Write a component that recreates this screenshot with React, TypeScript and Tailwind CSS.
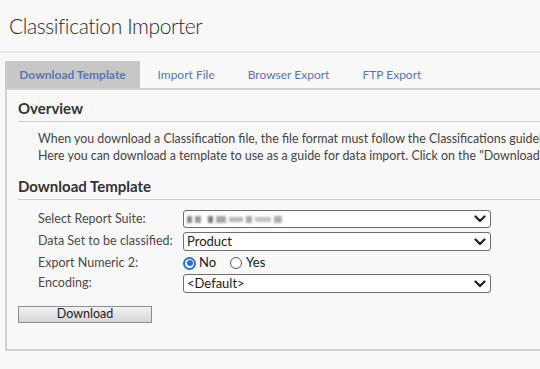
import { ReactNode } from "react";

function Chevron() {
  return (
    <svg width="12" height="8" viewBox="0 0 12 8" className="shrink-0">
      <polyline points="1.5,1.5 6,6 10.5,1.5" fill="none" stroke="#222" strokeWidth="2.2" strokeLinecap="round" strokeLinejoin="round" />
    </svg>
  );
}

function FakeSelect({ children, h = "h-[18px]" }: { children?: ReactNode; h?: string }) {
  return (
    <div className={`flex w-[308px] ${h} items-center justify-between rounded-[3px] border border-[#6e6e6e] bg-white pl-[3px] pr-[4px] text-[13px] leading-none text-[#1a1a1a]`}>
      <div className="flex items-center">{children}</div>
      <Chevron />
    </div>
  );
}

function Row({ label, h, children }: { label: string; h: string; children: ReactNode }) {
  return (
    <div className={`flex ${h} items-center`}>
      <div className="w-[145px] shrink-0 whitespace-nowrap text-[12.5px] text-[#4a4a4a]">{label}</div>
      {children}
    </div>
  );
}

function Heading({ children }: { children: ReactNode }) {
  return (
    <div className="border-b border-[#cfcfcf] pb-[3px] text-[15px] font-bold leading-[20px] text-[#333]">{children}</div>
  );
}

const tabs = ["Download Template", "Import File", "Browser Export", "FTP Export"];

export default function App() {
  return (
    <div className="h-[369px] w-[540px] overflow-hidden bg-[#f8f8f8] font-['Lato',sans-serif]">
      <div className="w-[760px]">
        <h1 className="h-[51px] pl-[9px] pt-[11px] text-[21px] font-light leading-[30px] tracking-[-0.4px] text-[#2c2c2c]">
          Classification Importer
        </h1>
        <div className="h-[2px] bg-[#e8e8e8]" />

        <div className="mt-[8px] flex h-[27px] pl-[5px]">
          {tabs.map((t, i) => (
            <div
              key={t}
              className={
                i === 0
                  ? "mr-[1px] flex w-[135px] items-center justify-center bg-[#c7c7c7] text-[12px] font-bold text-[#5676b3]"
                  : "flex items-center px-[16.5px] text-[12px] text-[#5676b3]"
              }
            >
              {t}
            </div>
          ))}
        </div>

        <div className="ml-[5px] h-[263px] border-b-2 border-l-2 border-t-2 border-[#d0d0d0] pl-[11px] pt-[8px]">
          <Heading>Overview</Heading>
          <div className="pl-[20px] pt-[8px] text-[12.4px] leading-[17px] whitespace-nowrap text-[#444]">
            <div>When you download a Classification file, the file format must follow the Classifications guidelines.</div>
            <div>Here you can download a template to use as a guide for data import. Click on the "Download" button.</div>
          </div>

          <div className="mt-[12px]">
            <Heading>Download Template</Heading>
          </div>

          <div className="pl-[20px] pt-[8px]">
            <Row label="Select Report Suite:" h="h-[22px]">
              <FakeSelect>
                <div className="flex items-center gap-[3px] blur-[1.2px]">
                  <span className="h-[7px] w-[5px] bg-[#8a8a8a]" />
                  <span className="h-[7px] w-[6px] bg-[#9a9a9a]" />
                  <span className="ml-[4px] h-[7px] w-[5px] bg-[#7a7a7a]" />
                  <span className="h-[7px] w-[10px] bg-[#a5a5a5]" />
                  <span className="h-[5px] w-[14px] bg-[#b8b8b8]" />
                  <span className="h-[7px] w-[6px] bg-[#aaa]" />
                  <span className="h-[5px] w-[16px] bg-[#c2c2c2]" />
                  <span className="h-[7px] w-[8px] bg-[#b0b0b0]" />
                </div>
              </FakeSelect>
            </Row>
            <Row label="Data Set to be classified:" h="h-[23px]">
              <FakeSelect h="h-[19px]">Product</FakeSelect>
            </Row>
            <Row label="Export Numeric 2:" h="h-[20px]">
              <div className="flex items-center text-[13px] text-[#1a1a1a]">
                <span className="flex h-[13px] w-[13px] items-center justify-center rounded-full bg-[#2a6de0]">
                  <span className="flex h-[9px] w-[9px] items-center justify-center rounded-full bg-white">
                    <span className="h-[6px] w-[6px] rounded-full bg-[#2a6de0]" />
                  </span>
                </span>
                <span className="ml-[3px]">No</span>
                <span className="ml-[14px] h-[12px] w-[12px] rounded-full border border-[#555] bg-white" />
                <span className="ml-[4px]">Yes</span>
              </div>
            </Row>
            <Row label="Encoding:" h="h-[21px]">
              <FakeSelect h="h-[19px]">&lt;Default&gt;</FakeSelect>
            </Row>
          </div>

          <button
            type="button"
            className="mt-[12px] h-[17px] w-[134px] border border-[#8e8e8e] bg-gradient-to-b from-[#f2f2f2] to-[#d6d6d6] text-[12.5px] leading-none text-[#222]"
          >
            Download
          </button>
        </div>
      </div>
    </div>
  );
}
